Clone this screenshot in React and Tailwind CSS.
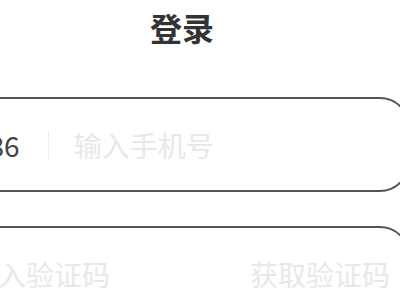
export default function App() {
  return (
    <div
      className="w-[400px] h-[300px] overflow-hidden bg-white"
      style={{ fontFamily: '"Noto Sans CJK SC", "Noto Sans", sans-serif' }}
    >
      <div className="w-[456px] ml-[-46px] pt-[5px]">
        <h1 className="h-[44px] text-center text-[32px] leading-[44px] font-bold text-[#333]">登录</h1>

        <div className="mt-[48px] h-[95px] rounded-[30px] border-2 border-[#555] flex items-center pl-[17px] pr-[20px]">
          <span className="text-[28px] text-[#444] leading-none">+86</span>
          <span className="w-px h-[28px] bg-[#ececec] ml-[28px] mr-[25px]" />
          <span className="text-[28px] text-[#e8e8e8] leading-none">输入手机号</span>
        </div>

        <div className="mt-[34px] h-[95px] rounded-[30px] border-2 border-[#555] flex items-center justify-between pl-[14px] pr-[18px]">
          <span className="text-[28px] text-[#e8e8e8] leading-none">输入验证码</span>
          <span className="text-[28px] text-[#e8e8e8] leading-none">获取验证码</span>
        </div>
      </div>
    </div>
  )
}
